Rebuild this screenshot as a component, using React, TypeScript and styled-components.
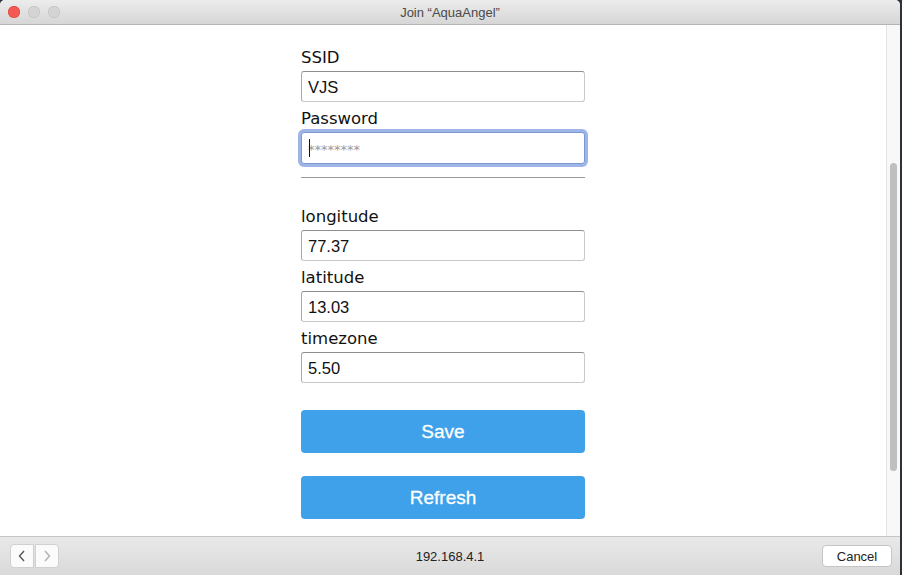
import * as React from 'react';
import styled, { createGlobalStyle } from 'styled-components';

const GlobalStyle = createGlobalStyle`
  html, body {
    margin: 0;
    padding: 0;
    background: #2b3338;
  }
  body {
    width: 902px;
    height: 575px;
    overflow: hidden;
  }
`;

const Fields = [
    { id: 'longitude', label: 'longitude', value: '77.37' },
    { id: 'latitude', label: 'latitude', value: '13.03' },
    { id: 'timezone', label: 'timezone', value: '5.50' },
];

const Window = styled.div`
  width: 900px;
  height: 575px;
  display: flex;
  flex-direction: column;
  background: #fff;
  border-radius: 5px 5px 0 0;
  overflow: hidden;
  font-family: "Liberation Sans", Arial, sans-serif;
`;

const TitleBar = styled.div`
  height: 24px;
  flex: none;
  display: flex;
  align-items: center;
  position: relative;
  background: linear-gradient(#ececec, #d6d6d6);
  border-bottom: 1px solid #b4b4b4;
`;

const Lights = styled.div`
  display: flex;
  gap: 8px;
  padding-left: 8px;
`;

const Light = styled.span<{ $color: string; $edge: string }>`
  width: 12px;
  height: 12px;
  border-radius: 50%;
  background: ${p => p.$color};
  box-shadow: inset 0 0 0 0.5px ${p => p.$edge};
`;

const Title = styled.div`
  position: absolute;
  left: 0;
  right: 0;
  text-align: center;
  font-size: 13px;
  color: #4a4a4a;
  pointer-events: none;
`;

const Body = styled.div`
  flex: 1;
  display: flex;
  min-height: 0;
`;

const Content = styled.main`
  flex: 1;
  display: flex;
  justify-content: center;
  padding-top: 21px;
`;

const Form = styled.form`
  width: 284px;
  display: flex;
  flex-direction: column;
`;

const Label = styled.label`
  display: block;
  height: 22px;
  line-height: 24px;
  margin-bottom: 3px;
  font-family: "DejaVu Sans", Verdana, sans-serif;
  font-size: 16.5px;
  color: #111;
`;

const Field = styled.div`
  position: relative;
  margin-bottom: 5px;
`;

const Input = styled.input<{ $focused?: boolean }>`
  display: block;
  box-sizing: border-box;
  width: 100%;
  height: ${p => (p.$focused ? 32 : 31)}px;
  margin: 0;
  padding: 1px 6px 0;
  border: 1px solid #c9c9c9;
  border-top-color: #8e8e8e;
  border-left-color: #a8a8a8;
  border-radius: 3px;
  font-family: "Liberation Sans", Arial, sans-serif;
  font-size: 16.5px;
  color: #111;
  background: #fff;
  outline: none;
  box-shadow: ${p => (p.$focused ? '0 0 0 3px #9db6e6' : 'none')};
  border-color: ${p => (p.$focused ? '#7b98d4' : undefined)};

  &::placeholder {
    color: #9a9a9a;
    font-family: "DejaVu Sans", Verdana, sans-serif;
    font-size: 13px;
    letter-spacing: 0;
  }
`;

const Caret = styled.span`
  position: absolute;
  left: 8px;
  top: 7px;
  width: 1px;
  height: 18px;
  background: #111;
`;

const Rule = styled.hr`
  width: 100%;
  margin: 8px 0 27px;
  border: none;
  border-top: 1px solid #9a9a9a;
`;

const Button = styled.button<{ $gap: number }>`
  height: 43px;
  width: 100%;
  margin-top: ${p => p.$gap}px;
  border: none;
  border-radius: 4px;
  background: #3fa1ea;
  color: #fff;
  font-family: "Liberation Sans", Arial, sans-serif;
  font-size: 19px;
  -webkit-text-stroke: 0.3px #fff;
`;

const ScrollTrack = styled.div`
  width: 14px;
  flex: none;
  background: #f8f8f8;
  border-left: 1px solid #e4e4e4;
  padding-top: 138px;
  box-sizing: border-box;
`;

const ScrollThumb = styled.div`
  width: 7px;
  height: 308px;
  margin-left: 3px;
  border-radius: 4px;
  background: #bfbfbf;
`;

const BottomBar = styled.div`
  height: 38px;
  flex: none;
  display: flex;
  align-items: center;
  justify-content: space-between;
  padding: 0 8px 0 10px;
  background: linear-gradient(#e9e9e9, #d9d9d9);
  border-top: 1px solid #c6c6c6;
  position: relative;
`;

const NavGroup = styled.div`
  display: flex;
  gap: 1px;
`;

const NavButton = styled.div<{ $dim?: boolean }>`
  width: 22px;
  height: 22px;
  display: flex;
  align-items: center;
  justify-content: center;
  background: #fbfbfb;
  border: 1px solid #d0d0d0;
  border-radius: ${p => (p.$dim ? '0 4px 4px 0' : '4px 0 0 4px')};
  color: ${p => (p.$dim ? '#b0b0b0' : '#555')};
`;

const Address = styled.div`
  position: absolute;
  left: 0;
  right: 0;
  text-align: center;
  font-size: 13px;
  color: #222;
  pointer-events: none;
`;

const CancelButton = styled.button`
  width: 70px;
  height: 22px;
  border: 1px solid #c4c4c4;
  border-radius: 4px;
  background: #fff;
  font-family: "Liberation Sans", Arial, sans-serif;
  font-size: 13px;
  color: #222;
  position: relative;
`;

const Chevron: React.FC<{ dir: 'left' | 'right' }> = ({ dir }) => (
    <svg width="10" height="14" viewBox="0 0 10 14">
        <path
            d={dir === 'left' ? 'M7 2 L2.5 7 L7 12' : 'M3 2 L7.5 7 L3 12'}
            fill="none"
            stroke="currentColor"
            strokeWidth="1.4"
        />
    </svg>
);

const App: React.FC = () => {
    return (
        <>
            <GlobalStyle />
            <Window>
                <TitleBar>
                    <Lights>
                        <Light $color="#f25a52" $edge="#d8413a" />
                        <Light $color="#d4d4d4" $edge="#bdbdbd" />
                        <Light $color="#d4d4d4" $edge="#bdbdbd" />
                    </Lights>
                    <Title>Join “AquaAngel”</Title>
                </TitleBar>
                <Body>
                    <Content>
                        <Form onSubmit={e => e.preventDefault()}>
                            <Label htmlFor="ssid">SSID</Label>
                            <Field>
                                <Input id="ssid" defaultValue="VJS" />
                            </Field>
                            <Label htmlFor="pass">Password</Label>
                            <Field>
                                <Input id="pass" type="password" placeholder="********" $focused />
                                <Caret />
                            </Field>
                            <Rule />
                            {Fields.map(field => (
                                <React.Fragment key={field.id}>
                                    <Label htmlFor={field.id}>{field.label}</Label>
                                    <Field>
                                        <Input id={field.id} defaultValue={field.value} />
                                    </Field>
                                </React.Fragment>
                            ))}
                            <Button type="button" $gap={22}>Save</Button>
                            <Button type="button" $gap={23}>Refresh</Button>
                        </Form>
                    </Content>
                    <ScrollTrack>
                        <ScrollThumb />
                    </ScrollTrack>
                </Body>
                <BottomBar>
                    <NavGroup>
                        <NavButton><Chevron dir="left" /></NavButton>
                        <NavButton $dim><Chevron dir="right" /></NavButton>
                    </NavGroup>
                    <Address>192.168.4.1</Address>
                    <CancelButton type="button">Cancel</CancelButton>
                </BottomBar>
            </Window>
        </>
    );
};

export default App;
